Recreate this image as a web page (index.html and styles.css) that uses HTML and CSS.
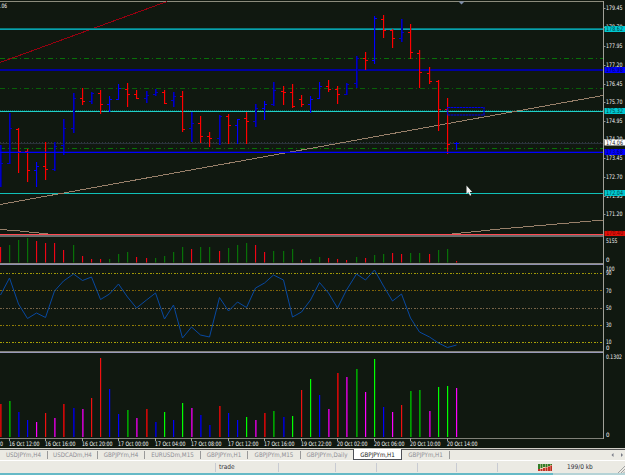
FILE: index.html
```html
<!DOCTYPE html>
<html lang="en">
<head>
<meta charset="UTF-8">
<meta name="viewport" content="width=device-width, initial-scale=1.0">
<title>GBPJPYm,H1</title>
<link rel="stylesheet" href="styles.css">
</head>
<body>

<div class="terminal">
  <div class="charts">
    <svg class="panel" id="price" viewBox="0 0 625 237" width="625" height="237"></svg>
    <svg class="panel" id="volume" viewBox="0 237 625 28" width="625" height="28"></svg>
    <svg class="panel" id="stoch" viewBox="0 265 625 88" width="625" height="88"></svg>
    <svg class="panel" id="osc" viewBox="0 353 625 95" width="625" height="95"></svg>
  </div>

  <div class="tabs">
    <span class="tab first">USDJPYm,H4</span>
    <span class="tab wide">USDCADm,H4</span>
    <span class="tab">GBPJPYm,H4</span>
    <span class="tab wider">EURUSDm,M15</span>
    <span class="tab">GBPJPYm,H1</span>
    <span class="tab long">GBPJPYm,M15</span>
    <span class="tab daily">GBPJPYm,Daily</span>
    <span class="tab active">GBPJPYm,H1</span>
    <span class="tab last">GBPJPYm,H1</span>
    <svg class="arrows" viewBox="0 0 16 8" width="16" height="8">
      <path d="M4.500 2v4L2.500 4zM12 2v4l2-2z" fill="#777a85"/>
    </svg>
  </div>

  <div class="status">
    <span class="cell blank"></span>
    <span class="cell trade">trade</span>
    <span class="cell c1"></span>
    <span class="cell c2"></span>
    <span class="cell c3"></span>
    <span class="cell c4"></span>
    <span class="cell c5"></span>
    <svg class="signal" viewBox="0 0 14 7" width="14" height="7">
      <rect width="14" height="7" fill="#e8d8b8"/>
      <path d="M1 0v5M3.500 0v4M6 0v3M8.500 0v3M11 0v2M13.300 0v1" stroke="#2b7a22" stroke-width="1.900"/>
      <path d="M1 5v2M3.500 5v2M6 4v3M8.500 3.500v3.500M11 2.500v4.500M13.300 1.500v5.500" stroke="#c02a20" stroke-width="1.900"/>
    </svg>
    <span class="traffic">199/0 kb</span>
    <svg class="grip" viewBox="0 0 7 8" width="7" height="8">
      <path d="M0 8L7 1M3 8l4-4M5.500 8L7 6.500" stroke="#999a9c" stroke-width="0.900"/>
    </svg>
  </div>
  <div class="edge"></div>
</div>

<script src="chart.js"></script>
</body>
</html>
```
FILE: styles.css
```css
body {
  margin: 0;
  background: #101810;
  font-family: "DejaVu Sans Condensed", "DejaVu Sans", sans-serif;
}

.terminal {
  width: 625px;
  height: 475px;
  overflow: hidden;
  display: flex;
  flex-direction: column;
}

.charts {
  height: 448px;
  display: flex;
  flex-direction: column;
  background: #101810;
}

.panel {
  display: block;
  overflow: visible;
  flex: none;
}

.panel text {
  font-family: "DejaVu Sans Condensed", "DejaVu Sans", sans-serif;
  font-size: 6.1px;
  fill: #f4f4f4;
}

.tabs {
  height: 12px;
  box-sizing: border-box;
  flex: none;
  display: flex;
  align-items: flex-start;
  background: #ebeae3;
  border-top: 1px solid #d2d0c8;
  box-shadow: inset 0 1px #555;
  color: #8e8e94;
  font-size: 6.2px;
  line-height: 10px;
}

.tab {
  width: 47px;
  height: 8px;
  margin-top: 2px;
  box-sizing: border-box;
  border-right: 1px solid #999;
  line-height: 7px;
  text-align: center;
  white-space: nowrap;
  flex: none;
}

.first { width: 48px; }
.wide { width: 50px; }
.wider { width: 56px; }
.long { width: 53px; }

.daily {
  width: 52px;
  border-right: 0;
}

.active {
  width: 49px;
  height: 11px;
  margin-top: 0;
  padding-top: 2px;
  border: 1px solid #4c4f55;
  border-top: 0;
  background: #fff;
  color: #222;
  position: relative;
}

.last { width: 48px; }

.arrows {
  margin: 2px 0 0 auto;
}

.status {
  height: 13px;
  box-sizing: border-box;
  flex: none;
  display: flex;
  align-items: center;
  background: #ebeae3;
  border-top: 1px solid #fff;
  color: #303038;
  font-size: 6.5px;
  line-height: 9px;
}

.cell {
  height: 9px;
  box-sizing: border-box;
  border-right: 1px solid #c8cbd2;
  flex: none;
}

.blank { width: 216px; }

.trade {
  width: 63px;
  padding-left: 3px;
}

.c1 { width: 57px; }
.c2 { width: 41px; }
.c3 { width: 41px; }
.c4 { width: 39px; }
.c5 { width: 41px; }

.signal {
  margin-left: 40px;
}

.traffic {
  margin-left: 15px;
}

.grip {
  margin: 3px 0 0 auto;
}

.edge {
  flex: none;
  height: 2px;
  background: linear-gradient(to right, #65b9c6 553px, #b5d3d6 553px);
}
```
FILE: chart.js
```js
const STEP = 9.13;
const AXIS = 603;
const RED = '#ff0000', BLUE = '#0000ff', NAVY = '#0000c4', GREEN = '#087008';

// high, low, open, close, colour
const bars = [
  [145,187,163,163,'n'],[113,164,163,128,'n'],[128,173,129,151,'r'],[149,182,151,170,'r'],[162,187,170,166,'b'],
  [142,180,166,169,'r'],[142,171,169,146,'n'],[119,155,145,128,'n'],[93,133,128,98,'n'],[88,105,98,101,'r'],
  [92,104,101,93,'n'],[90,114,93,104,'r'],[96,112,104,99,'b'],[84,100,99,88,'b'],[83,107,89,94,'r'],
  [90,99,94,98,'r'],[91,103,98,95,'n'],[89,96,94,92,'n'],[90,104,92,103,'r'],[92,107,100,96,'n'],
  [91,132,96,129,'r'],[112,142,128,123,'n'],[116,143,123,136,'r'],[132,147,136,138,'r'],[115,145,138,116,'n'],
  [114,144,116,125,'r'],[119,144,125,119,'b'],[112,144,118,121,'r'],[104,127,121,108,'n'],[101,120,108,104,'b'],
  [82,106,104,90,'n'],[86,105,91,92,'r'],[84,108,92,106,'r'],[95,107,99,104,'r'],[96,113,104,99,'b'],
  [82,99,98,86,'b'],[80,92,86,89,'r'],[86,104,89,94,'r'],[83,95,94,84,'n'],[56,88,83,58,'n'],
  [52,70,58,60,'r'],[16,64,60,18,'b'],[15,38,19,30,'r'],[29,48,30,38,'r'],[19,42,38,32,'n'],
  [24,59,32,52,'r'],[50,88,53,72,'r'],[67,84,73,81,'r'],[80,131,81,109,'r'],[98,154,109,144,'r'],
  [142,150,143,143,'b']
];

const volume = [
  [247,'r'],[245,'g'],[240,'g'],[238,'g'],[241,'r'],[243,'r'],[243,'r'],[250,'r'],[245,'g'],[256,'r'],
  [259,'r'],[259,'r'],[259,'g'],[254,'g'],[252,'g'],[257,'r'],[258,'r'],[258,'g'],[256,'g'],[252,'g'],
  [247,'g'],[249,'r'],[247,'g'],[247,'g'],[251,'r'],[248,'g'],[245,'g'],[243,'g'],[245,'r'],[252,'r'],
  [251,'g'],[251,'g'],[249,'g'],[260,'r'],[259,'g'],[257,'g'],[258,'r'],[259,'r'],[260,'r'],[257,'g'],
  [258,'r'],[255,'g'],[254,'g'],[253,'r'],[254,'r'],[253,'g'],[253,'g'],[254,'r'],[250,'g'],[249,'g'],[261,'r']
];

const stoch = [
  295,278,304,318.5,313,317.5,291,281,274,280.5,277,299.5,294,284,297,308,300,293,319,305,338,327,335,337,
  297.5,311,302,307.5,288,283,275,280,317,312,300,282.5,293,308,290,274,280,270,286,301,294,318,332,337,343,347.5,345
];

const osc = [
  [404,'d'],[401,'g'],[412,'n'],[420,'b'],[422,'m'],[413,'r'],[418,'p'],[404,'d'],[408,'n'],[409,'p'],
  [398,'r'],[358,'r'],[389,'b'],[414,'b'],[410,'g'],[418,'p'],[409,'d'],[422,'n'],[412,'l'],[420,'b'],
  [403,'l'],[408,'p'],[415,'n'],[425,'n'],[406,'d'],[413,'b'],[420,'b'],[417,'l'],[420,'p'],[413,'d'],
  [411,'g'],[417,'n'],[416,'l'],[390,'r'],[379,'l'],[395,'b'],[409,'p'],[373,'d'],[377,'p'],[369,'g'],
  [392,'m'],[359,'l'],[407,'b'],[412,'m'],[405,'r'],[391,'g'],[390,'g'],[411,'p'],[387,'l'],[386,'l'],[388,'m']
];

const oscColors = { r: '#f01010', d: '#c80808', g: '#00a000', l: '#00ff00', b: BLUE, n: NAVY, m: '#ff00ff', p: '#c000c0' };

const xAt = i => Math.floor(i * STEP);

function rect(x, y, w, h, fill) {
  return `<rect x="${x}" y="${y}" width="${w}" height="${h}" fill="${fill}"/>`;
}

function line(x1, y1, x2, y2, color, dash) {
  return `<line x1="${x1}" y1="${y1}" x2="${x2}" y2="${y2}" stroke="${color}" stroke-dasharray="${dash || 'none'}"/>`;
}

function label(y, text, width, color, x = 606) {
  return `<text x="${x}" y="${y}" textLength="${width}" lengthAdjust="spacingAndGlyphs"${color ? ` style="fill:${color}"` : ''}>${text}</text>`;
}

function axis(y, h) {
  return rect(AXIS, y, 1, h, '#a0a098');
}

function drawPrice() {
  let s = rect(0, 1, 604, 1, '#8c8c7c');
  s += '<path d="M0 62.500L167 1.500" stroke="#980010" fill="none" shape-rendering="crispEdges"/>';
  // horizontal levels
  s += rect(0, 28, AXIS, 1, '#087878') + rect(0, 29, AXIS, 1, '#08a0b0');
  s += line(0, 58.5, AXIS, 58.5, '#087008', '5 3 1 3');
  s += line(0, 88.5, AXIS, 88.5, '#086008', '5 3 1 3');
  s += line(0, 148.5, AXIS, 148.5, '#087008', '5 3 1 3');
  s += rect(0, 69, AXIS, 2, '#0000a0');
  s += line(0, 110.5, AXIS, 110.5, '#086058', '1 1') + rect(0, 111, AXIS, 1, '#20d0c8');
  s += line(0, 142.5, AXIS, 142.5, '#303840', '1 2') + rect(0, 143, AXIS, 1, '#293039');
  s += rect(0, 193, AXIS, 1, '#10c0b8');
  s += '<path d="M0 204.500L603 95.500M0 229.500L20 231L48 234M447 234.500L500 229L603 220" stroke="#98806a" fill="none" shape-rendering="crispEdges"/>';

  bars.forEach(([hi, lo, open, close, c], i) => {
    const x = xAt(i);
    const color = c === 'r' ? RED : c === 'b' ? BLUE : NAVY;
    s += rect(x, hi, 1, lo - hi, color);
    s += rect(x + 1, hi, c === 'n' ? 1 : 0.3, lo - hi, c === 'r' ? '#a00000' : '#000088');
    s += rect(x - 2, open, 2, 1, color) + rect(x + 1, close, 2, 1, color);
  });
  s += rect(0, 151.7, AXIS, 1.3, '#0000ff');
  s += '<rect x="447.500" y="107.500" width="36.500" height="7.500" fill="none" stroke="#0000e8" stroke-width="1.200" stroke-dasharray="2.500 0.500"/>';

  s += rect(0, 234, 604, 1, '#ff4850') + rect(0, 235, 604, 2, '#686c6c');
  s += axis(1, 236);
  s += '<path d="M458.500 1.500h6l-3 3z" fill="#7c8ca8"/>';

  const labels = [['179.45', 8], ['178.70', 27], ['177.95', 46], ['177.20', 65], ['176.45', 84], ['175.70', 102],
    ['174.95', 121], ['174.20', 139], ['173.45', 158], ['172.70', 177], ['171.95', 196], ['171.20', 214]];
  labels.forEach(([t, y]) => {
    s += rect(604, y, 1.5, 1, '#909088') + label(y + 2.3, t, 16.5);
  });
  // price tags
  [['178.62', 29, '#00c8d0', '#003c40'], ['176.98', 70, '#0000ff', '#000060'], ['175.32', 111, '#00c8d0', '#003c40'],
    ['173.68', 152, '#0000ff', '#000060'], ['174.06', 142.5, '#ffffff', '#222222'], ['172.04', 193, '#00c8d0', '#003c40']
  ].forEach(([t, y, bg, fg]) => {
    s += rect(604.5, y - 3, 20.5, 6, bg) + label(y + 2.3, t, 17, fg);
  });
  s += rect(604.5, 231, 20.5, 5, '#e01008') + label(235.3, '170.40', 17, '#780000');

  s += '<text x="0" y="8" textLength="7" lengthAdjust="spacingAndGlyphs">.06</text>';
  s += '<path d="M466.500 185.500v8.500l1.800-1.700 1.700 3.400 1.300-.6-1.500-3.200h2.400z" fill="#f4f4f4"/>';
  document.getElementById('price').innerHTML = s;
}

function drawVolume() {
  let s = '';
  volume.forEach(([top, c], i) => {
    s += rect(xAt(i), top, 1, 262 - top + 0.5, c === 'r' ? '#f00810' : GREEN);
    s += rect(xAt(i) + 1, top, 0.5, 262 - top + 0.5, c === 'r' ? '#500028' : '#084008');
  });
  s += rect(0, 263, 604, 1, '#8c8c84') + rect(0, 264, 604, 1, '#9090b0') + axis(237, 28);
  s += label(242.8, '5155', 11.5) + label(261.8, '0', 3.5);
  document.getElementById('volume').innerHTML = s;
}

function drawStoch() {
  let s = '';
  [[273, '#a09808'], [290, '#806408'], [308, '#786448'], [325, '#907c08'], [342, '#a8a008']].forEach(([y, c]) => {
    s += line(0, y + 0.5, AXIS, y + 0.5, c, '2 1 1 2');
  });
  const points = stoch.map((y, i) => `${xAt(i) + 0.5},${y}`).join(' ');
  s += `<polyline points="${points}" fill="none" stroke="#0848a0" stroke-width="1"/>`;
  s += rect(0, 351, 604, 1, '#808078') + rect(0, 352, 604, 1, '#9898b8') + axis(265, 88);
  s += label(271.2, '100', 8.5) + label(275.3, '90', 5.5) + label(292.8, '70', 5.5) + label(310, '50', 5.5);
  s += label(327, '30', 5.5) + label(344.2, '10', 5.5) + label(349.7, '0', 3.5);
  document.getElementById('stoch').innerHTML = s;
}

function drawOsc() {
  let s = '';
  osc.forEach(([top, c], i) => {
    const wide = 'dgnp'.includes(c) ? 1.7 : 1.2;
    s += rect(xAt(i), top, wide, 437 - top, oscColors[c]);
  });
  s += rect(0, 438, 604, 1, '#808078') + axis(353, 86);
  s += label(359.2, '0.1302', 16) + label(436.5, '0', 3.5);
  ['16 Oct 12:00', '16 Oct 16:00', '16 Oct 20:00', '17 Oct 00:00', '17 Oct 04:00', '17 Oct 08:00', '17 Oct 12:00',
    '17 Oct 16:00', '19 Oct 22:00', '20 Oct 02:00', '20 Oct 06:00', '20 Oct 10:00', '20 Oct 14:00'
  ].forEach((t, n) => {
    const x = xAt(1 + n * 4);
    s += rect(x, 438, 1, 3, '#a0a098') + label(445.5, t, 30.5, '', x);
  });
  s += label(445.5, '0', 3, '', 0);
  document.getElementById('osc').innerHTML = s;
}

drawPrice();
drawVolume();
drawStoch();
drawOsc();
```
